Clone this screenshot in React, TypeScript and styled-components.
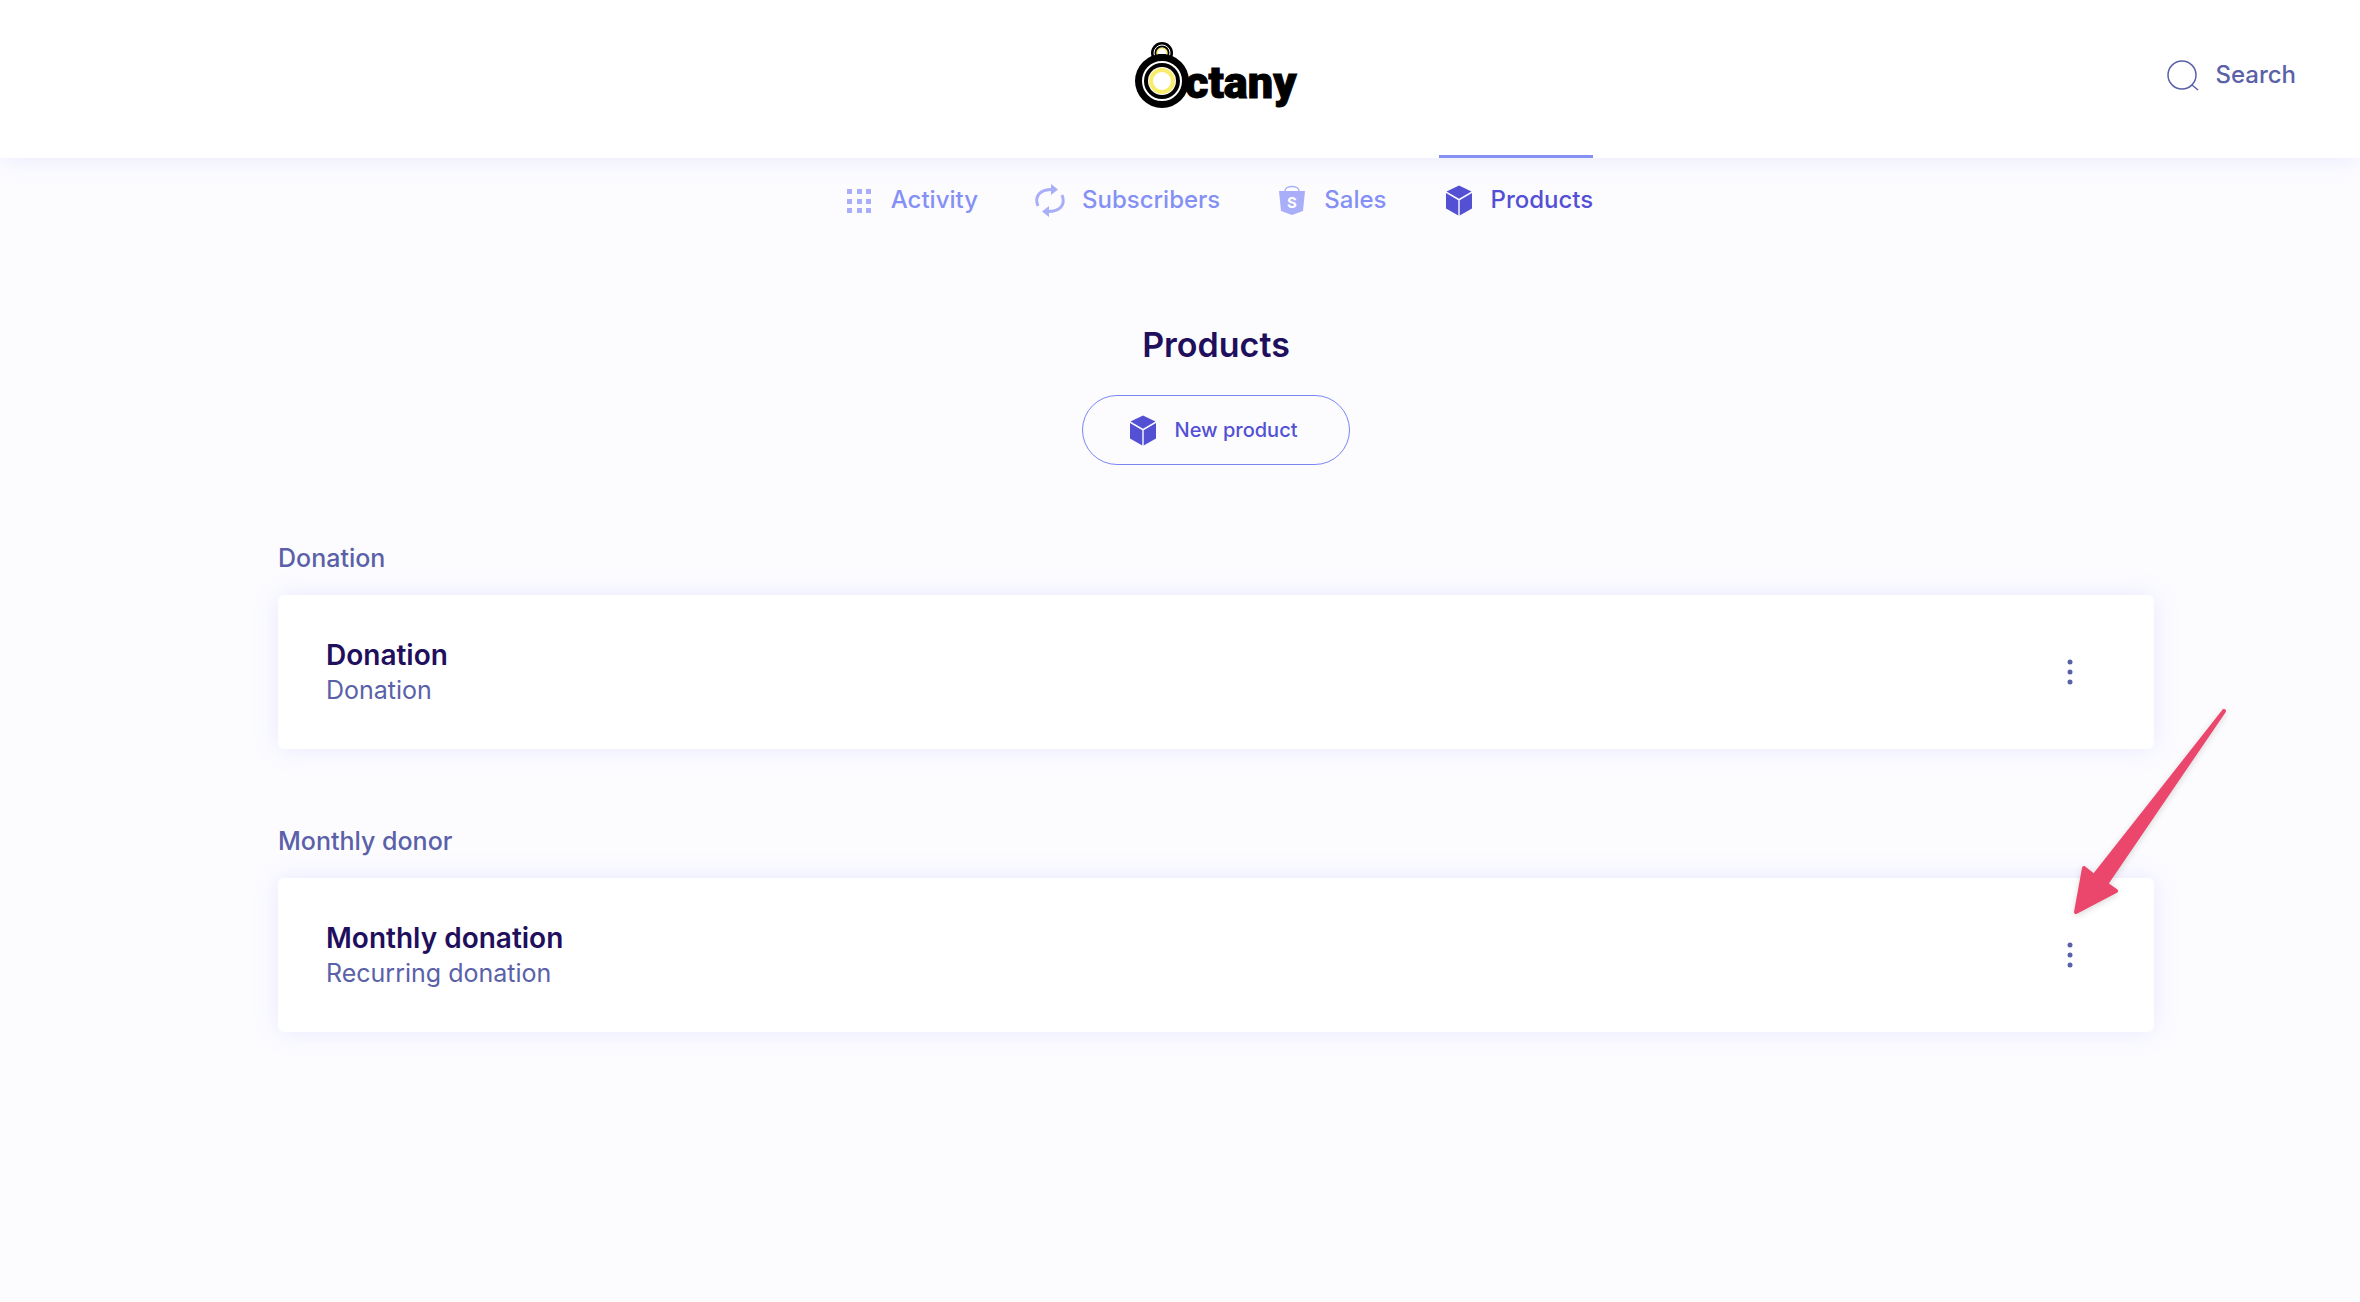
import React from "react";
import styled, { createGlobalStyle, css } from "styled-components";

const color = {
  page: "#fcfcff",
  ink: "#1f0f5c",
  muted: "#5a61a8",
  link: "#8590f5",
  icon: "#a9aef8",
  active: "#5350d4",
};

const GlobalStyle = createGlobalStyle`
  *, *::before, *::after { box-sizing: border-box; }
  body { margin: 0; background: ${color.page}; font-family: Inter, "Noto Sans", sans-serif; color: ${color.ink}; }
  h1, h2, h3, p { margin: 0; padding: 0; }
  button { font: inherit; cursor: pointer; }
`;

const Page = styled.div`
  min-height: 100vh;
  background: ${color.page};
`;

const Header = styled.header`
  display: grid;
  grid-template-columns: 1fr auto 1fr;
  align-items: center;
  height: 158px;
  padding: 0 64px 8px 136px;
  background: #fff;
  box-shadow: 0 0 24px rgba(133, 144, 245, 0.18);
`;

const LogoLink = styled.a`
  grid-column: 2;
  display: block;
  height: 72px;
  svg { overflow: visible; }
`;

const SearchButton = styled.button`
  grid-column: 3;
  justify-self: end;
  display: flex;
  align-items: center;
  gap: 16px;
  padding: 0;
  border: 0;
  background: none;
  color: ${color.muted};
  font-size: 24px;
  font-weight: 500;
  line-height: 32px;
`;

const Nav = styled.nav`
  display: flex;
  justify-content: center;
  gap: 52px;
  padding-left: 72px;
`;

const NavItem = styled.a<{ $active?: boolean }>`
  display: flex;
  align-items: center;
  gap: 12px;
  height: 86px;
  margin-top: -3px;
  border-top: 3px solid transparent;
  color: ${color.link};
  font-size: 24px;
  font-weight: 500;
  line-height: 32px;
  text-decoration: none;
  svg { color: ${color.icon}; }
  ${(p) => p.$active && css`
    border-top-color: ${color.link};
    color: ${color.active};
    svg { color: ${color.active}; }
  `}
`;

const Main = styled.main`
  padding: 80px 206px 64px 278px;
`;

const Intro = styled.div`
  display: flex;
  flex-direction: column;
  align-items: center;
  gap: 26px;
`;

const Title = styled.h1`
  font-size: 34px;
  font-weight: 600;
  line-height: 48px;
`;

const NewButton = styled.button`
  display: flex;
  align-items: center;
  justify-content: center;
  gap: 12px;
  width: 268px;
  height: 70px;
  padding: 0 12px 0 0;
  border: 1px solid #7a85f4;
  border-radius: 35px;
  background: none;
  color: ${color.active};
  font-size: 20px;
  font-weight: 500;
`;

const Groups = styled.div`
  display: grid;
  gap: 76px;
  margin-top: 77px;
`;

const SectionTitle = styled.h2`
  padding-bottom: 21px;
  color: ${color.muted};
  font-size: 25px;
  font-weight: 500;
  line-height: 32px;
`;

const Card = styled.article`
  display: flex;
  align-items: center;
  justify-content: space-between;
  padding: 42px 64px 42px 48px;
  border-radius: 6px;
  background: #fff;
  box-shadow: 0 0 24px rgba(133, 144, 245, 0.18);
`;

const ProductName = styled.h3`
  font-size: 28px;
  font-weight: 600;
  line-height: 36px;
`;

const ProductKind = styled.p`
  color: ${color.muted};
  font-size: 25px;
  line-height: 34px;
`;

const MenuButton = styled.button`
  display: flex;
  padding: 0;
  border: 0;
  background: none;
  color: ${color.muted};
`;

const Pointer = styled.svg`
  position: absolute;
  top: 700px;
  right: 126px;
  pointer-events: none;
  filter: drop-shadow(0 2px 3px rgba(0, 0, 0, 0.15));
`;

const Logo = () => (
  <svg width="164" height="72" viewBox="0 2 164 72" role="img" aria-label="Octany">
    <circle cx="28" cy="16" r="11" />
    <circle cx="28" cy="16" r="8" fill="none" stroke="#fff" strokeWidth="1" />
    <circle cx="28" cy="16" r="5" fill="#fff" stroke="#f7ec6e" strokeWidth="1.5" />
    <path d="M24 17h8a4 4 0 0 1-8 0z" />
    <circle cx="28" cy="44" r="27" />
    <circle cx="28" cy="44" r="19" fill="none" stroke="#fff" strokeWidth="2" />
    <circle cx="28" cy="44" r="14" fill="#fff" />
    <circle cx="28" cy="44" r="11" fill="#fff" stroke="#f7ec6e" strokeWidth="4" />
    <text x="51" y="61" fontFamily="Roboto, sans-serif" fontSize="45" fontWeight="900" stroke="#000" strokeWidth="1">ctany</text>
  </svg>
);

const SearchIcon = () => (
  <svg width="32" height="32" viewBox="0 0 32 32" fill="none" stroke="currentColor" strokeWidth="1.5" aria-hidden="true">
    <circle cx="15" cy="16" r="14" />
    <path d="M25 26l6 5" />
  </svg>
);

const GridIcon = () => (
  <svg width="40" height="40" viewBox="0 0 40 40" fill="currentColor" aria-hidden="true">
    {[9, 19, 28].map((y) => [8, 18, 27].map((x) => <rect key={`${x}-${y}`} x={x} y={y} width="5" height="5" />))}
  </svg>
);

const RepeatIcon = () => (
  <svg width="40" height="40" viewBox="0 0 40 40" fill="none" stroke="currentColor" strokeWidth="3" aria-hidden="true">
    <path d="M8 26C4 16 10 9.500 22 9.500M32 15C36 25 30 31.500 18 31.500" />
    <path d="M21 4l7 5.500-7 5.500zM19 26l-7 5.500 7 5.500z" fill="currentColor" stroke="none" />
  </svg>
);

const BagIcon = () => (
  <svg width="40" height="40" viewBox="0 0 40 40" aria-hidden="true">
    <path d="M13 11c0-6 14-6 14 0" fill="none" stroke="currentColor" strokeWidth="1.5" />
    <path d="M7 11h26l-2 20-11 4-11-4z" fill="currentColor" />
    <text x="20" y="28" textAnchor="middle" fontFamily="Inter, sans-serif" fontSize="15" fontWeight="700" fill="#fff">S</text>
  </svg>
);

const BoxIcon = () => (
  <svg width="40" height="40" viewBox="0 0 40 40" fill="currentColor" aria-hidden="true">
    <path d="M20 5.500l12.500 6L20 18.800 7.500 11.500zM7 13l12.300 7.200V35.500L7 28.500zM33 13l-12.300 7.200V35.500L33 28.500z" />
  </svg>
);

const DotsIcon = () => (
  <svg width="40" height="40" viewBox="0 0 40 40" fill="currentColor" aria-hidden="true">
    {[10, 20, 30].map((y) => <circle key={y} cx="20" cy={y} r="2.500" />)}
  </svg>
);

const navigation = [
  { label: "Activity", icon: <GridIcon /> },
  { label: "Subscribers", icon: <RepeatIcon /> },
  { label: "Sales", icon: <BagIcon /> },
  { label: "Products", icon: <BoxIcon />, active: true },
];

const groups = [
  { title: "Donation", name: "Donation", kind: "Donation" },
  { title: "Monthly donor", name: "Monthly donation", kind: "Recurring donation" },
];

export default function App() {
  return (
    <Page>
      <GlobalStyle />
      <Header>
        <LogoLink href="#"><Logo /></LogoLink>
        <SearchButton type="button"><SearchIcon />Search</SearchButton>
      </Header>
      <Nav>
        {navigation.map((n) => (
          <NavItem key={n.label} href="#" $active={n.active} aria-current={n.active ? "page" : undefined}>
            {n.icon}
            {n.label}
          </NavItem>
        ))}
      </Nav>
      <Main>
        <Intro>
          <Title>Products</Title>
          <NewButton type="button"><BoxIcon />New product</NewButton>
        </Intro>
        <Groups>
          {groups.map((g) => (
            <section key={g.title}>
              <SectionTitle>{g.title}</SectionTitle>
              <Card>
                <div>
                  <ProductName>{g.name}</ProductName>
                  <ProductKind>{g.kind}</ProductKind>
                </div>
                <MenuButton type="button" aria-label={`Options for ${g.name}`}><DotsIcon /></MenuButton>
              </Card>
            </section>
          ))}
        </Groups>
      </Main>
      <Pointer width="164" height="220" viewBox="0 0 164 220" aria-hidden="true">
        <path d="M6 212L14 168L24 176L154 11L36 184L46 191Z" fill="#eb466c" stroke="#eb466c" strokeWidth="4" strokeLinejoin="round" />
      </Pointer>
    </Page>
  );
}
